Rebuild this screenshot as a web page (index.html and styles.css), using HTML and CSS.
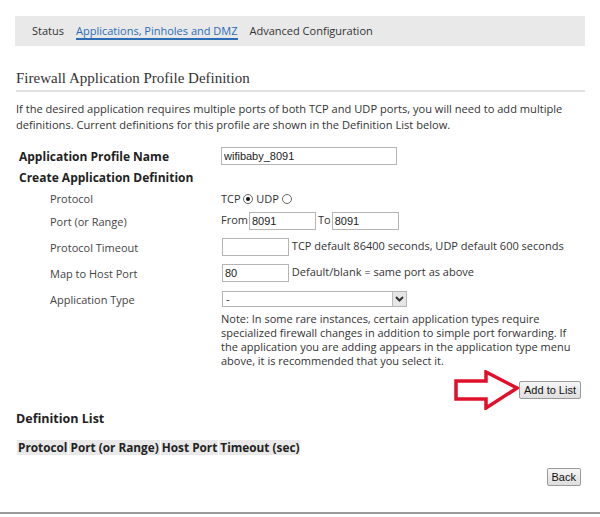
FILE: index.html
```html
<!DOCTYPE html>
<html lang="en">
<head>
    <meta charset="UTF-8">
    <title>Firewall Application Profile Definition</title>
    <link rel="stylesheet" href="styles.css">
</head>
<body>
    <div class="page">
        <div class="subnav">
            <a class="tab" href="#">Status</a>
            <a class="tab active" href="#">Applications, Pinholes and DMZ</a>
            <a class="tab" href="#">Advanced Configuration</a>
        </div>

        <h2 class="title">Firewall Application Profile Definition</h2>

        <p class="intro">If the desired application requires multiple ports of both TCP and UDP ports, you will need to add multiple definitions. Current definitions for this profile are shown in the Definition List below.</p>

        <table class="form">
            <colgroup>
                <col class="col-label">
                <col class="col-value">
            </colgroup>
            <tr class="row-name">
                <th class="label-main">Application Profile Name</th>
                <td><input type="text" class="field wide" value="wifibaby_8091"></td>
            </tr>
            <tr class="row-create">
                <th class="label-main" colspan="2">Create Application Definition</th>
            </tr>
            <tr class="row-proto">
                <td class="label">Protocol</td>
                <td class="proto">TCP <span class="radio on"></span> UDP <span class="radio"></span></td>
            </tr>
            <tr class="row-input">
                <td class="label">Port (or Range)</td>
                <td class="range"><span>From</span><input type="text" class="field short" value="8091"><span class="to">To</span><input type="text" class="field short" value="8091"></td>
            </tr>
            <tr class="row-input">
                <td class="label">Protocol Timeout</td>
                <td class="first"><input type="text" class="field short" value=""> TCP default 86400 seconds, UDP default 600 seconds</td>
            </tr>
            <tr class="row-input">
                <td class="label">Map to Host Port</td>
                <td class="first"><input type="text" class="field short" value="80"> Default/blank = same port as above</td>
            </tr>
            <tr class="row-input">
                <td class="label">Application Type</td>
                <td class="first">
                    <div class="select">
                        <span class="select-value">-</span>
                        <span class="select-btn">
                            <svg width="9" height="6" viewBox="0 0 9 6"><path d="M1 1 L4.5 4.5 L8 1" fill="none" stroke="#333" stroke-width="2"/></svg>
                        </span>
                    </div>
                </td>
            </tr>
            <tr class="row-note">
                <td></td>
                <td class="note">Note: In some rare instances, certain application types require specialized firewall changes in addition to simple port forwarding. If the application you are adding appears in the application type menu above, it is recommended that you select it.</td>
            </tr>
        </table>

        <div class="actions add">
            <svg class="arrow" width="66" height="40" viewBox="0 0 66 40">
                <path d="M2 11 L32 11 L32 2 L63 18 L32 38 L32 29 L2 29 Z" fill="#fff" stroke="#e0102a" stroke-width="3.5" stroke-linejoin="miter"/>
            </svg>
            <button class="btn">Add to List</button>
        </div>

        <h3 class="section">Definition List</h3>

        <table class="list">
            <tr>
                <th>Protocol</th>
                <th>Port (or Range)</th>
                <th>Host Port</th>
                <th>Timeout (sec)</th>
            </tr>
        </table>

        <div class="actions back">
            <button class="btn">Back</button>
        </div>
    </div>
    <div class="footer-line"></div>
</body>
</html>
```

FILE: styles.css
```css
body {
    margin: 0;
    font-family: "Open Sans", sans-serif;
    font-size: 11px;
    color: #333;
    background: #fff;
}

.page {
    padding: 16px 15px 0 15px;
    height: 512px;
    box-sizing: border-box;
}

/* sub navigation */
.subnav {
    background: #e9e9e9;
    height: 30px;
    display: flex;
    align-items: center;
    gap: 12px;
    padding-left: 17px;
    font-size: 11px;
}

.tab {
    color: #333;
    text-decoration: none;
    padding-top: 2px;
    border-bottom: 2px solid transparent;
    line-height: 14px;
}

.tab.active {
    color: #2a6db5;
    border-bottom-color: #2a6db5;
}

.title {
    font-family: "Liberation Serif", serif;
    font-weight: normal;
    font-size: 15px;
    color: #333;
    margin: 22px 0 0 1px;
    padding-bottom: 2px;
    border-bottom: 2px solid #e2e2e2;
    line-height: 20px;
}

.intro {
    margin: 9px 0 0 1px;
    line-height: 16px;
    font-size: 11.1px;
}

/* form */
.form {
    border-collapse: collapse;
    table-layout: fixed;
    margin-top: 12px;
    margin-left: 4px;
    width: 566px;
}

.col-label { width: 202px; }

.form td, .form th {
    padding: 0;
    vertical-align: middle;
    text-align: left;
    white-space: nowrap;
}

.label-main {
    font-weight: bold;
    color: #222;
    font-size: 12px;
}

.label {
    padding-left: 31px !important;
    color: #444;
}

.row-name { height: 22px; }
.row-create { height: 21px; }
.row-proto { height: 20px; }
.row-input { height: 26px; }

.first {
    padding-left: 1px !important;
}

.range input {
    margin-left: 1px;
}

.range .to {
    margin-left: 2px;
}

.field {
    font-family: "Liberation Sans", Arial, sans-serif;
    font-size: 11px;
    color: #222;
    height: 18px;
    box-sizing: border-box;
    border: 1px solid #b5b5b5;
    padding: 0 2px;
    margin: 0;
    vertical-align: middle;
}

.field.wide { width: 176px; }
.field.short { width: 67px; }

.radio {
    display: inline-block;
    width: 10px;
    height: 10px;
    box-sizing: border-box;
    border: 1px solid #666;
    border-radius: 50%;
    vertical-align: -1px;
    position: relative;
}

.radio.on::after {
    content: "";
    position: absolute;
    left: 2px;
    top: 2px;
    width: 4px;
    height: 4px;
    border-radius: 50%;
    background: #111;
}

.select {
    width: 185px;
    height: 16px;
    box-sizing: border-box;
    border: 1px solid #b5b5b5;
    display: flex;
    align-items: center;
    justify-content: space-between;
    background: #fff;
}

.select-value {
    font-family: "Liberation Sans", Arial, sans-serif;
    padding-left: 3px;
}

.select-btn {
    width: 13px;
    height: 14px;
    background: #e6e6e6;
    border-left: 1px solid #bbb;
    display: flex;
    align-items: center;
    justify-content: center;
}

.note {
    white-space: normal !important;
    line-height: 14px;
    padding-right: 4px !important;
    vertical-align: top !important;
}

/* buttons */
.actions {
    display: flex;
    justify-content: flex-end;
    align-items: center;
    padding-right: 4px;
}

.actions.add {
    margin-top: 2px;
}

.arrow {
    margin-right: -1px;
}

.btn {
    font-family: "Liberation Sans", Arial, sans-serif;
    font-size: 11px;
    color: #111;
    height: 18px;
    padding: 0 4px;
    border: 1px solid #9a9a9a;
    border-radius: 2px;
    background: linear-gradient(#f6f6f6, #dedede);
}

.section {
    font-size: 12.5px;
    font-weight: bold;
    color: #222;
    margin: 1px 0 0 1px;
    line-height: 16px;
}

.list {
    border-spacing: 1px;
    margin-top: 12px;
    margin-left: 1px;
}

.list th {
    background: #e9e9e9;
    font-weight: bold;
    font-size: 11.8px;
    color: #222;
    padding: 0 1px;
    height: 15px;
    line-height: 15px;
}

.actions.back {
    margin-top: 12px;
}

.footer-line {
    height: 2px;
    background: #9a9a9a;
}
```
